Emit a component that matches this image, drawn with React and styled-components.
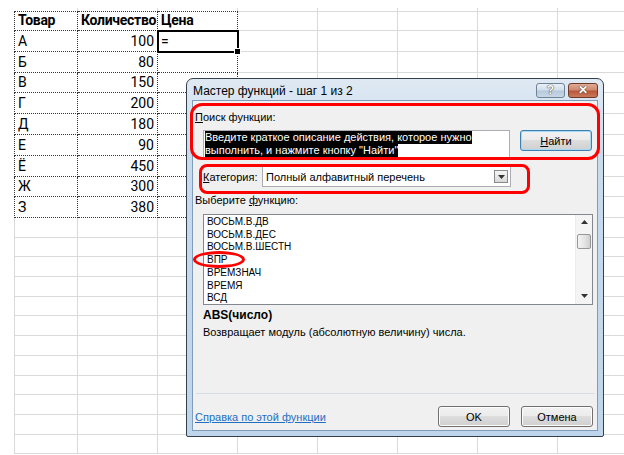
import React from 'react';
import styled, { createGlobalStyle } from 'styled-components';

const GlobalStyle = createGlobalStyle`
  html, body {
    margin: 0;
    padding: 0;
    background: #ffffff;
    overflow: hidden;
  }
`;

const colWidths = [64, 80, 80, 80, 80, 80, 80, 80, 80];
const dataHeights = [20, 21, 21, 20, 21, 21, 21, 21, 20, 21];

const tableRows = [
  ['Товар', 'Количество', 'Цена'],
  ['А', '100', '='],
  ['Б', '80', ''],
  ['В', '150', ''],
  ['Г', '200', ''],
  ['Д', '180', ''],
  ['Е', '90', ''],
  ['Ё', '450', ''],
  ['Ж', '300', ''],
  ['З', '380', ''],
];

const functions = [
  'ВОСЬМ.В.ДВ',
  'ВОСЬМ.В.ДЕС',
  'ВОСЬМ.В.ШЕСТН',
  'ВПР',
  'ВРЕМЗНАЧ',
  'ВРЕМЯ',
  'ВСД',
];

const dotted = '1px dotted #333';
const solid = '1px solid #dadada';

const Page = styled.div`
  position: relative;
  width: 624px;
  height: 455px;
  overflow: hidden;
  background: #fff;
`;

const Sheet = styled.div`
  padding: 8px 0 0 14px;
  font-family: Roboto, 'Liberation Sans', sans-serif;
  font-size: 14px;
  color: #000;
`;

const Row = styled.div`
  display: flex;
  height: ${(p) => p.$h}px;
`;

const Cell = styled.div`
  position: relative;
  flex: none;
  width: ${(p) => p.$w}px;
  box-sizing: border-box;
  display: flex;
  align-items: flex-end;
  justify-content: ${(p) => (p.$num ? 'flex-end' : 'flex-start')};
  padding: 0 3px 0 3px;
  font-weight: ${(p) => (p.$bold ? 700 : 400)};
  letter-spacing: ${(p) => (p.$bold ? '-0.3px' : '0')};
  line-height: 19px;
  white-space: nowrap;
  border-right: ${(p) => (p.$dot ? dotted : solid)};
  border-bottom: ${(p) => (p.$stub ? 'none' : p.$dot ? dotted : solid)};
  border-top: ${(p) => (p.$top ? (p.$dot ? dotted : solid) : 'none')};
  border-left: ${(p) => (p.$left ? (p.$dot ? dotted : solid) : 'none')};

  ${(p) =>
    p.$active &&
    `
    &::after {
      content: '';
      position: absolute;
      left: -1px;
      top: -1px;
      right: -2px;
      bottom: -2px;
      border: 2px solid #000;
    }
    &::before {
      content: '';
      position: absolute;
      right: -4px;
      bottom: -4px;
      width: 5px;
      height: 5px;
      background: #000;
      border: 1px solid #fff;
      z-index: 1;
    }
  `}
`;

const Window = styled.div`
  position: absolute;
  left: 186px;
  top: 78px;
  width: 418px;
  height: 359px;
  box-sizing: border-box;
  border: 1px solid #34404c;
  border-radius: 7px 7px 2px 2px;
  background: linear-gradient(180deg, #dfe9f3 0%, #c9dcee 20%, #bfd5eb 100%);
  padding: 0 5px 5px 5px;
  display: flex;
  flex-direction: column;
  font-family: 'Liberation Sans', Arial, sans-serif;
  font-size: 11px;
  color: #000;
`;

const TitleBar = styled.div`
  height: 21px;
  display: flex;
  align-items: flex-start;
  justify-content: space-between;
`;

const Title = styled.div`
  font-size: 12px;
  line-height: 14px;
  padding: 5px 0 0 1px;
  color: #000;
`;

const Caption = styled.div`
  display: flex;
  gap: 3px;
  padding-top: 4px;
`;

const CaptionButton = styled.div`
  width: ${(p) => (p.$close ? 30 : 29)}px;
  height: 15px;
  box-sizing: border-box;
  border: 1px solid ${(p) => (p.$close ? '#6e3a2a' : '#6f8296')};
  border-radius: 3px;
  background: ${(p) =>
    p.$close
      ? 'linear-gradient(180deg, #e0aa96 0%, #cf8a70 45%, #b9573a 55%, #c97a5c 100%)'
      : 'linear-gradient(180deg, #e9f0f7 0%, #d2dfec 45%, #b6c9dc 55%, #c9d8e8 100%)'};
  display: flex;
  align-items: center;
  justify-content: center;
  color: #fff;
  font-weight: 700;
  font-size: 12px;
  line-height: 13px;
  text-shadow: 0 0 1px #333, 0 0 1px #333;
`;

const Body = styled.div`
  flex: 1;
  background: #f0f0f0;
  border: 1px solid #7f9db9;
  display: flex;
  flex-direction: column;
  padding: 9px 0 3px 2px;
  box-sizing: border-box;
`;

const Label = styled.div`
  line-height: 15px;
  padding-left: ${(p) => p.$indent || 0}px;
  margin-top: ${(p) => p.$mt || 0}px;
  font-weight: ${(p) => (p.$bold ? 700 : 400)};
  font-size: ${(p) => (p.$bold ? 12 : 11)}px;
`;

const SearchRow = styled.div`
  display: flex;
  align-items: flex-start;
  gap: 10px;
  padding-left: 8px;
  margin-top: 5px;
`;

const SearchBox = styled.div`
  width: 307px;
  height: 28px;
  box-sizing: border-box;
  background: #fff;
  border: 1px solid #abadb3;
  padding: 0 0 0 1px;
`;

const Selected = styled.span`
  display: block;
  width: fit-content;
  background: #000;
  color: #fff;
  line-height: 13px;
`;

const Button = styled.div`
  width: 72px;
  height: 21px;
  box-sizing: border-box;
  border: 1px solid ${(p) => (p.$focus ? '#3c7fb1' : '#707070')};
  border-radius: 3px;
  background: linear-gradient(180deg, #f2f2f2 0%, #ebebeb 49%, #dddddd 50%, #cfcfcf 100%);
  box-shadow: ${(p) => (p.$focus ? 'inset 0 0 0 1px #a6d9f4' : 'inset 0 0 0 1px #fcfcfc')};
  display: flex;
  align-items: center;
  justify-content: center;
  font-size: 11px;
`;

const CategoryRow = styled.div`
  display: flex;
  align-items: center;
  padding-left: 8px;
  margin-top: 8px;
  height: 21px;
`;

const CategoryLabel = styled.div`
  width: 59px;
`;

const Select = styled.div`
  width: 249px;
  height: 21px;
  box-sizing: border-box;
  border: 1px solid #abadb3;
  background: #fff;
  display: flex;
  align-items: center;
  justify-content: space-between;
  padding: 0 2px 0 3px;
`;

const DropButton = styled.div`
  width: 14px;
  height: 13px;
  box-sizing: border-box;
  border: 1px solid #8a8a8a;
  background: linear-gradient(180deg, #f6f6f6, #d8d8d8);
  display: flex;
  align-items: center;
  justify-content: center;
`;

const ListBox = styled.div`
  margin: 6px 0 0 8px;
  width: 390px;
  height: 91px;
  box-sizing: border-box;
  border: 1px solid #828790;
  background: #fff;
  display: flex;
`;

const Items = styled.div`
  flex: 1;
  padding: 1px 0 0 3px;
  font-size: 10px;
  line-height: 12.7px;
  overflow: hidden;
`;

const ScrollBar = styled.div`
  width: 17px;
  background: #f4f4f4;
  border-left: 1px solid #ececec;
  display: flex;
  flex-direction: column;
  align-items: center;
  justify-content: space-between;
  padding: 5px 0 6px 0;
  box-sizing: border-box;
`;

const Thumb = styled.div`
  width: 14px;
  height: 15px;
  box-sizing: border-box;
  border: 1px solid #979797;
  border-radius: 2px;
  background: linear-gradient(90deg, #f4f4f4, #e2e2e2 60%, #cfcfcf);
  margin-top: -36px;
`;

const Separator = styled.div`
  margin: auto 0 0 1px;
  width: 399px;
  height: 1px;
  background: #d5dfe5;
`;

const Footer = styled.div`
  display: flex;
  align-items: center;
  margin-top: 12px;
  gap: 11px;
  padding-right: 4px;
`;

const HelpLink = styled.span`
  flex: 1;
  color: #1e6fc3;
  text-decoration: underline;
`;

const RedFrame = styled.div`
  position: absolute;
  left: ${(p) => p.$x}px;
  top: ${(p) => p.$y}px;
  width: ${(p) => p.$w}px;
  height: ${(p) => p.$h}px;
  box-sizing: border-box;
  border: 3px solid #f00;
  border-radius: ${(p) => p.$r};
  pointer-events: none;
`;

const Arrow = ({ up }) => (
  <svg width="7" height="4" viewBox="0 0 7 4">
    <path d={up ? 'M0 4 L3.5 0 L7 4 Z' : 'M0 0 L7 0 L3.5 4 Z'} fill="#333" />
  </svg>
);

export default function App() {
  const emptyRows = Array.from({ length: 12 });
  return (
    <Page>
      <GlobalStyle />
      <Sheet>
        <Row $h={3}>
          {colWidths.map((w, ci) => (
            <Cell key={ci} $w={w} $stub />
          ))}
        </Row>
        {tableRows.map((r, ri) => (
          <Row key={ri} $h={dataHeights[ri]}>
            {colWidths.map((w, ci) => {
              const inTable = ci < 3;
              return (
                <Cell
                  key={ci}
                  $w={w}
                  $dot={inTable}
                  $left={ci === 0}
                  $top={ri === 0}
                  $bold={ri === 0}
                  $num={ri > 0 && ci === 1}
                  $active={ri === 1 && ci === 2}
                >
                  {inTable ? r[ci] : ''}
                </Cell>
              );
            })}
          </Row>
        ))}
        {emptyRows.map((_, ri) => (
          <Row key={'e' + ri} $h={19.7}>
            {colWidths.map((w, ci) => (
              <Cell key={ci} $w={w} $left={ci === 0} />
            ))}
          </Row>
        ))}
      </Sheet>

      <Window>
        <TitleBar>
          <Title>Мастер функций - шаг 1 из 2</Title>
          <Caption>
            <CaptionButton>?</CaptionButton>
            <CaptionButton $close>✕</CaptionButton>
          </Caption>
        </TitleBar>
        <Body>
          <Label>
            <u>П</u>оиск функции:
          </Label>
          <SearchRow>
            <SearchBox>
              <Selected>Введите краткое описание действия, которое нужно</Selected>
              <Selected>выполнить, и нажмите кнопку "Найти"</Selected>
            </SearchBox>
            <Button $focus>
              <span>
                <u>Н</u>айти
              </span>
            </Button>
          </SearchRow>
          <CategoryRow>
            <CategoryLabel>
              <u>К</u>атегория:
            </CategoryLabel>
            <Select>
              <span>Полный алфавитный перечень</span>
              <DropButton>
                <Arrow />
              </DropButton>
            </Select>
          </CategoryRow>
          <Label $mt={6}>
            Выберите <u>ф</u>ункцию:
          </Label>
          <ListBox>
            <Items>
              {functions.map((f) => (
                <div key={f}>{f}</div>
              ))}
            </Items>
            <ScrollBar>
              <Arrow up />
              <Thumb />
              <Arrow />
            </ScrollBar>
          </ListBox>
          <Label $bold $indent={8} $mt={3}>
            ABS(число)
          </Label>
          <Label $indent={8} $mt={2}>
            Возвращает модуль (абсолютную величину) числа.
          </Label>
          <Separator />
          <Footer>
            <HelpLink>Справка по этой функции</HelpLink>
            <Button>OK</Button>
            <Button>Отмена</Button>
          </Footer>
        </Body>
        <RedFrame $x={3} $y={24} $w={410} $h={57} $r="12px" />
        <RedFrame $x={12} $y={85} $w={331} $h={30} $r="8px" />
        <RedFrame $x={6} $y={172} $w={52} $h={17} $r="50%" />
      </Window>
    </Page>
  );
}
